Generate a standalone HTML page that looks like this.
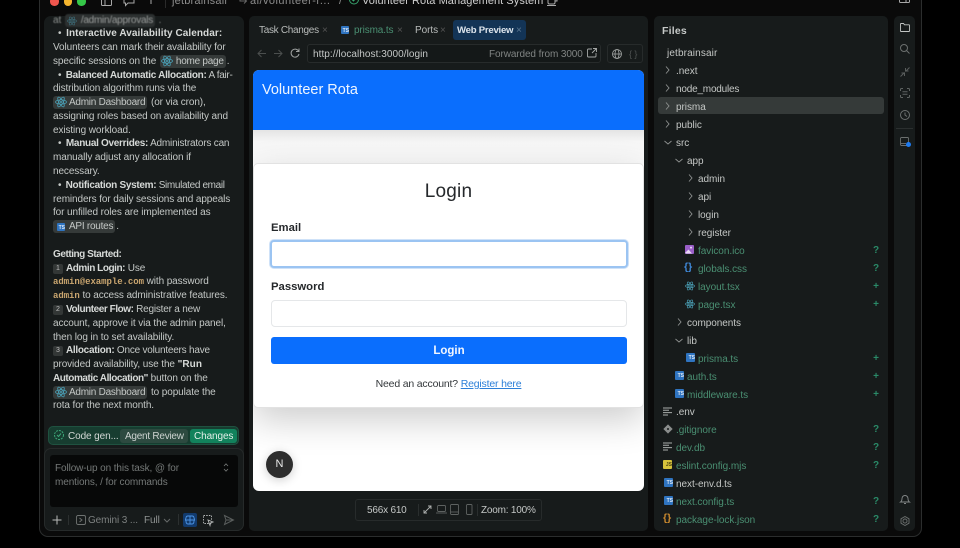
<!DOCTYPE html>
<html><head><meta charset="utf-8">
<style>
html,body{margin:0;padding:0;background:#000;width:960px;height:548px;overflow:hidden}
body{font-family:"Liberation Sans",sans-serif;position:relative}
#root{position:absolute;left:0;top:0;width:960px;height:548px;overflow:hidden;filter:blur(.35px)}
.a{position:absolute}
.t{position:absolute;white-space:nowrap;line-height:14px;height:14px}
.c{font-size:10px;color:#c4c8c6;letter-spacing:-.1px;left:53px;margin-top:1px}
.c b{color:#d6d9d7;font-weight:bold;letter-spacing:.07px}
.c b.n1{letter-spacing:-.3px}
.c b.n2{letter-spacing:-.45px}
.bl{margin-left:5px;margin-right:2px}
.chip{background:#353a39;border-radius:3px;padding:1px 2px 1px 16px;position:relative;color:#c4c8c6;margin:0 1px;letter-spacing:-.25px}
.code{font-family:"Liberation Mono",monospace;font-size:9px;color:#c9a56f;font-weight:bold;letter-spacing:-.05px}
.num{display:inline-block;width:10px;height:10px;background:#333736;border-radius:2px;font-size:7px;line-height:10px;text-align:center;color:#bbb;margin-right:3px;vertical-align:1px;letter-spacing:0}
.f{font-size:10px;letter-spacing:-.05px;color:#c4c7c5;margin-top:1px}
.r{margin-top:2px}
.g{color:#4a8f72}
.s{font-size:10px;font-weight:bold;color:#2a8a68;left:873px;width:6px;text-align:center;margin-top:1px}
.ts{position:absolute;width:9px;height:9px;background:#2f74c0;color:#dfe9f5;font-size:5px;font-weight:bold;line-height:11px;text-align:right;border-radius:1px;overflow:hidden;letter-spacing:0}
svg{position:absolute;overflow:visible;fill:none}
</style></head><body><div id="root">
<svg width="0" height="0"><defs>
<symbol id="re" viewBox="0 0 12 12" overflow="visible"><g fill="none" stroke="#4a9fb5" stroke-width=".8"><ellipse cx="6" cy="6" rx="5.5" ry="2.1"/><ellipse cx="6" cy="6" rx="5.5" ry="2.1" transform="rotate(60 6 6)"/><ellipse cx="6" cy="6" rx="5.5" ry="2.1" transform="rotate(120 6 6)"/></g><circle cx="6" cy="6" r="1" fill="#4a9fb5"/></symbol>
</defs></svg>

<!-- window -->
<div class="a" style="left:39px;top:-20px;width:883px;height:557px;background:#0a0a0a;border:1px solid #2b2d2d;border-radius:9px;box-sizing:border-box"></div>

<!-- title bar -->
<div class="a" style="left:50px;top:-3px;width:8.5px;height:8.5px;border-radius:50%;background:#f0564e"></div>
<div class="a" style="left:63.500px;top:-3px;width:8.5px;height:8.5px;border-radius:50%;background:#f5b52e"></div>
<div class="a" style="left:77px;top:-3px;width:8.5px;height:8.5px;border-radius:50%;background:#35c748"></div>
<svg style="left:101px;top:-3px" width="11" height="9" stroke="#a8a8a8"><rect x=".5" y="-1" width="10" height="9.5" rx="1"/><path d="M4 -1V8.5"/></svg>
<svg style="left:123px;top:-3px" width="12" height="10" stroke="#a8a8a8"><path d="M1 -1H11V6H5L2.5 8.5V6H1Z"/></svg>
<svg style="left:146px;top:-3px" width="10" height="10" stroke="#a8a8a8"><path d="M5 -2V7M.5 2.5H9.5"/></svg>
<div class="a" style="left:165px;top:0;width:1px;height:8px;background:#2a2a2a"></div>
<div class="t f" style="left:172px;top:-7px;color:#8d8d8d;font-size:11px;letter-spacing:.2px">jetbrainsair</div>
<svg style="left:238px;top:-2px" width="10" height="9" stroke="#666"><path d="M2 -2V3H8M6 .5 8.5 3 6 5.5"/></svg>
<div class="t f" style="left:250px;top:-7px;color:#8d8d8d;font-size:11px;letter-spacing:.45px">ai/volunteer-r...</div>
<div class="t f" style="left:339px;top:-7px;color:#8d8d8d;font-size:11px">/</div>
<svg style="left:349px;top:-3px" width="10" height="10" stroke="#39a56f"><circle cx="5" cy="2.5" r="4.5"/><path d="M3 2.5 4.5 4 7 1"/></svg>
<div class="t f" style="left:362px;top:-7px;color:#cfcfcf;font-size:11px;letter-spacing:.05px">Volunteer Rota Management System</div>
<svg style="left:547px;top:-2px" width="11" height="9" stroke="#aaa"><path d="M1 -1H8V4.5Q8 6 6.5 6H2.5Q1 6 1 4.5ZM8 0H10V3H8M0 7.5H9"/></svg>
<svg style="left:899px;top:-3px" width="12" height="9" stroke="#a8a8a8"><rect x=".5" y="-1" width="10" height="6.5" rx="1"/><path d="M7 -1V5.5"/></svg>

<!-- chat panel -->
<div class="a" style="left:44px;top:16px;width:200px;height:515px;background:#171b1b;border-radius:7px"></div>
<div class="t c" style="top:13px;color:#8c908e;filter:blur(.4px)">at <span class="chip" style="color:#9a9d9c;background:#2c3030">/admin/approvals</span> .</div>
<svg style="left:67px;top:16px" width="10" height="10"><use href="#re" width="10" height="10" opacity=".5"/></svg>
<div class="t c" style="top:26px"><span class="bl">•</span> <b>Interactive Availability Calendar:</b></div>
<div class="t c" style="top:40px">Volunteers can mark their availability for</div>
<div class="t c" style="top:54px">specific sessions on the <span class="chip">home page</span>.</div>
<svg style="left:161px;top:55px" width="12" height="12"><use href="#re" width="12" height="12"/></svg>
<div class="t c" style="top:68px;letter-spacing:-.3px"><span class="bl">•</span> <b class="n1">Balanced Automatic Allocation:</b> A fair-</div>
<div class="t c" style="top:81px">distribution algorithm runs via the</div>
<div class="t c" style="top:95px;margin-left:-1px"><span class="chip">Admin Dashboard</span> (or via cron),</div>
<svg style="left:55px;top:96px" width="12" height="12"><use href="#re" width="12" height="12"/></svg>
<div class="t c" style="top:109px">assigning roles based on availability and</div>
<div class="t c" style="top:123px">existing workload.</div>
<div class="t c" style="top:136px;letter-spacing:-.2px"><span class="bl">•</span> <b class="n1">Manual Overrides:</b> Administrators can</div>
<div class="t c" style="top:150px">manually adjust any allocation if</div>
<div class="t c" style="top:164px">necessary.</div>
<div class="t c" style="top:178px;letter-spacing:-.35px"><span class="bl">•</span> <b class="n1">Notification System:</b> Simulated email</div>
<div class="t c" style="top:192px">reminders for daily sessions and appeals</div>
<div class="t c" style="top:205px">for unfilled roles are implemented as</div>
<div class="t c" style="top:219px;margin-left:-1px"><span class="chip">API routes</span>.</div>
<div class="ts" style="left:57px;top:223px;width:8px;height:8px">TS</div>
<div class="t c" style="top:247px"><b class="n2">Getting Started:</b></div>
<div class="t c" style="top:261px"><span class="num">1</span><b class="n2">Admin Login:</b> Use</div>
<div class="t c" style="top:274px"><span class="code">admin@example.com</span> with password</div>
<div class="t c" style="top:288px"><span class="code">admin</span> to access administrative features.</div>
<div class="t c" style="top:302px;letter-spacing:-.2px"><span class="num">2</span><b class="n2">Volunteer Flow:</b> Register a new</div>
<div class="t c" style="top:316px">account, approve it via the admin panel,</div>
<div class="t c" style="top:330px">then log in to set availability.</div>
<div class="t c" style="top:343px;letter-spacing:-.22px"><span class="num">3</span><b class="n1">Allocation:</b> Once volunteers have</div>
<div class="t c" style="top:357px">provided availability, use the <b>"Run</b></div>
<div class="t c" style="top:371px"><b class="n2">Automatic Allocation"</b> button on the</div>
<div class="t c" style="top:385px;margin-left:-1px"><span class="chip">Admin Dashboard</span> to populate the</div>
<svg style="left:55px;top:386px" width="12" height="12"><use href="#re" width="12" height="12"/></svg>
<div class="t c" style="top:398px">rota for the next month.</div>

<!-- status pill -->
<div class="a" style="left:48px;top:426px;width:191px;height:19px;background:#173d30;border:1px solid #1f5240;border-radius:5px;box-sizing:border-box"></div>
<svg style="left:54px;top:430px" width="11" height="11" stroke="#3da878"><circle cx="5" cy="5" r="4.5" stroke-dasharray="2 1"/><path d="M3 5 4.5 6.5 7 3.5"/></svg>
<div class="t c" style="left:68px;top:429px;color:#d3d8d5">Code gen...</div>
<div class="a" style="left:120px;top:429px;width:68px;height:14px;background:#2d4a40;border-radius:3px"></div>
<div class="t c" style="left:125px;top:429px;color:#cdd3d0;letter-spacing:-.25px">Agent Review</div>
<div class="a" style="left:190px;top:429px;width:47px;height:14px;background:#12825c;border-radius:3px"></div>
<div class="t c" style="left:194px;top:429px;color:#e3efe9">Changes</div>

<!-- input -->
<div class="a" style="left:44px;top:448px;width:200px;height:83px;background:#171b1b;border:1px solid #262a2a;border-radius:7px;box-sizing:border-box"></div>
<div class="a" style="left:50px;top:455px;width:188px;height:52px;background:#070808;border-radius:3px"></div>
<div class="t c" style="left:55px;top:461px;color:#747877">Follow-up on this task, @ for</div>
<div class="t c" style="left:55px;top:475px;color:#747877">mentions, / for commands</div>
<svg style="left:223px;top:463px" width="6" height="9" stroke="#767a79" stroke-width=".8"><path d="M1 3 3 .8 5 3M1 6 3 8.2 5 6"/></svg>
<svg style="left:52px;top:515px" width="10" height="10" stroke="#b8bbba"><path d="M5 .5V9.5M.5 5H9.5"/></svg>
<div class="a" style="left:68px;top:515px;width:1px;height:10px;background:#2c3030"></div>
<svg style="left:76px;top:515px" width="10" height="10" stroke="#6f7372" stroke-width=".9"><rect x=".5" y=".5" width="9" height="9" rx="1.5"/><path d="M3.5 3 6 5 3.5 7"/></svg>
<div class="t c" style="left:88px;top:513px;color:#7d8180">Gemini 3 ...</div>
<div class="t c" style="left:144px;top:513px;color:#8f9392">Full</div>
<svg style="left:163px;top:518px" width="8" height="5" stroke="#666a69"><path d="M1 1 4 4 7 1"/></svg>
<div class="a" style="left:178px;top:514px;width:1px;height:11px;background:#2c3030"></div>
<div class="a" style="left:183px;top:513px;width:14px;height:14px;background:#123a6c;border-radius:2px"></div>
<svg style="left:185px;top:515px" width="10" height="10" stroke="#4c94e4" stroke-width=".9"><path d="M5 1V9M3 1Q1 1 1 3Q0 5 1 6Q1 9 3 9H7Q9 9 9 6Q10 5 9 3Q9 1 7 1ZM1 5H9"/></svg>
<svg style="left:203px;top:515px" width="11" height="11" stroke="#b6b9b8" stroke-width=".9"><rect x=".5" y=".5" width="8" height="8" stroke-dasharray="1.5 1.2"/><path d="M5 5 10 7 7.5 8 7 10.5Z" fill="#171b1b"/></svg>
<svg style="left:224px;top:515px" width="10" height="10" stroke="#5a5e5d"><path d="M.5 .5 9.5 5 .5 9.5 2 5ZM2 5H9.5"/></svg>

<!-- middle panel -->
<div class="a" style="left:249px;top:16px;width:399px;height:515px;background:#171b1b;border-radius:5px"></div>
<div class="t f" style="left:259px;top:23px;color:#b8bbba;letter-spacing:-.3px">Task Changes</div>
<div class="t f" style="left:322px;top:23px;color:#555">×</div>
<div class="ts" style="left:341px;top:26px;width:8px;height:8px">TS</div>
<div class="t f" style="left:354px;top:23px;color:#4a8f72;letter-spacing:-.13px">prisma.ts</div>
<div class="t f" style="left:397px;top:23px;color:#555">×</div>
<div class="t f" style="left:415px;top:23px;color:#b8bbba">Ports</div>
<div class="t f" style="left:440px;top:23px;color:#555">×</div>
<div class="a" style="left:453px;top:20px;width:73px;height:20px;background:#133456;border-radius:3px"></div>
<div class="t f" style="left:457px;top:23px;color:#dce4ec;font-weight:bold;font-size:9.6px;letter-spacing:-.25px">Web Preview</div>
<div class="t f" style="left:516px;top:23px;color:#5a7690">×</div>

<svg style="left:257px;top:49px" width="10" height="9" stroke="#4b4f4e"><path d="M9 4.5H1M4.5 1 1 4.5 4.5 8"/></svg>
<svg style="left:273px;top:49px" width="10" height="9" stroke="#4b4f4e"><path d="M1 4.5H9M5.5 1 9 4.5 5.5 8"/></svg>
<svg style="left:290px;top:48px" width="10" height="10" stroke="#9ea1a0"><path d="M8.5 3A4 4 0 1 0 9 6M9 .5V3.5H6"/></svg>
<div class="a" style="left:307px;top:44px;width:294px;height:19px;border:1px solid #272b2b;border-radius:3px;box-sizing:border-box;background:#141818"></div>
<div class="t f" style="left:313px;top:47px;color:#c4c7c6;letter-spacing:.06px">http://localhost:3000/login</div>
<div class="t f" style="left:489px;top:47px;color:#808483;letter-spacing:-.1px">Forwarded from 3000</div>
<svg style="left:587px;top:48px" width="10" height="10" stroke="#a5a8a7" stroke-width=".9"><path d="M5 1H1.5Q.5 1 .5 2V8Q.5 9 1.5 9H8Q9 9 9 8V5M6 .5H9.5V4M9.5 .5 5 5"/></svg>
<div class="a" style="left:607px;top:44px;width:36px;height:19px;border:1px solid #272b2b;border-radius:3px;box-sizing:border-box"></div>
<svg style="left:612px;top:49px" width="10" height="10" stroke="#a5a8a7" stroke-width=".8"><circle cx="5" cy="5" r="4.5"/><ellipse cx="5" cy="5" rx="2" ry="4.5"/><path d="M.5 5H9.5"/></svg>
<div class="t f" style="left:629px;top:46px;color:#4f5352;font-size:9px">{ }</div>

<!-- preview -->
<div class="a" style="left:253px;top:70px;width:391px;height:421px;background:#fff;border-radius:6px;overflow:hidden">
  <div class="a" style="left:0;top:0;width:391px;height:60px;background:#0a6efd"></div>
  <div class="a" style="left:0;top:60px;width:391px;height:34px;background:linear-gradient(#e4e4e4,#f6f6f6 35%,#fafafa)"></div>
  <div class="a" style="left:0;top:93px;width:391px;height:245px;background:#fff;border:1px solid #e2e2e2;border-radius:5px;box-sizing:border-box;box-shadow:0 12px 36px rgba(0,0,0,.2)"></div>
  <div class="t" style="left:9px;top:11px;height:18px;line-height:18px;font-size:14.5px;color:#eef5ff">Volunteer Rota</div>
  <div class="t" style="left:0;width:391px;text-align:center;top:110px;height:24px;line-height:24px;font-size:19px;color:#25282b;letter-spacing:.2px">Login</div>
  <div class="t" style="left:18px;top:151px;font-size:11.3px;font-weight:bold;color:#25282b">Email</div>
  <div class="a" style="left:17px;top:170px;width:358px;height:28px;background:#fff;border:2px solid #9bc4f2;border-radius:4px;box-sizing:border-box;box-shadow:0 0 0 1px #cfe2f8"></div>
  <div class="t" style="left:18px;top:210px;font-size:11.3px;font-weight:bold;color:#25282b">Password</div>
  <div class="a" style="left:18px;top:230px;width:356px;height:27px;background:#fff;border:1px solid #e5e7e9;border-radius:4px;box-sizing:border-box"></div>
  <div class="a" style="left:18px;top:267px;width:356px;height:27px;background:#0a6efd;border-radius:3px;color:#f1f6ff;font-size:11.5px;font-weight:bold;line-height:28px;text-align:center">Login</div>
  <div class="t" style="left:0;width:391px;text-align:center;top:307px;font-size:10.5px;color:#33373a;letter-spacing:-.18px">Need an account? <span style="color:#2c7fd8;text-decoration:underline">Register here</span></div>
  <div class="a" style="left:13px;top:381px;width:27px;height:27px;border-radius:50%;background:#2d2d2d;box-shadow:0 2px 10px rgba(0,0,0,.2);color:#e8e8e8;font-size:11px;line-height:27px;text-align:center">N</div>
</div>

<!-- bottom toolbar -->
<div class="a" style="left:355px;top:499px;width:187px;height:22px;border:1px solid #272b2b;border-radius:3px;box-sizing:border-box"></div>
<div class="t f" style="left:367px;top:503px;color:#c4c7c6;letter-spacing:-.2px">566x 610</div>
<div class="a" style="left:418px;top:504px;width:1px;height:12px;background:#2a2e2e"></div>
<svg style="left:423px;top:505px" width="9" height="9" stroke="#b0b3b2" stroke-width=".9"><path d="M1 8 8 1M5 1H8V4M1 5V8H4"/></svg>
<svg style="left:436px;top:505px" width="11" height="9" stroke="#5e6261" stroke-width=".9"><rect x="1.5" y=".5" width="8" height="6" rx="1"/><path d="M0 8H11"/></svg>
<svg style="left:450px;top:504px" width="10" height="11" stroke="#5e6261" stroke-width=".9"><rect x=".5" y=".5" width="8" height="10" rx="1"/><path d="M.5 8H8.5"/></svg>
<svg style="left:466px;top:504px" width="7" height="11" stroke="#5e6261" stroke-width=".9"><rect x=".5" y=".5" width="5.5" height="10" rx="1"/></svg>
<div class="a" style="left:477px;top:504px;width:1px;height:12px;background:#2a2e2e"></div>
<div class="t f" style="left:481px;top:503px;color:#c4c7c6;letter-spacing:-.2px">Zoom: 100%</div>

<!-- files panel -->
<div class="a" style="left:654px;top:16px;width:234px;height:515px;background:#171b1b;border-radius:5px"></div>
<div class="t" style="left:662px;top:24px;font-size:10.5px;font-weight:bold;color:#c6c9c8;letter-spacing:.2px">Files</div>
<div class="a" style="left:658px;top:97px;width:226px;height:17px;background:#353a39;border-radius:3px"></div>
<div class="t f r" style="left:667px;top:45px;letter-spacing:.13px">jetbrainsair</div>
<div class="t f r" style="left:676px;top:63px">.next</div>
<div class="t f r" style="left:676px;top:81px;letter-spacing:-.2px">node_modules</div>
<div class="t f r" style="left:676px;top:99px">prisma</div>
<div class="t f r" style="left:676px;top:117px">public</div>
<div class="t f r" style="left:676px;top:135px">src</div>
<div class="t f r" style="left:687px;top:153px">app</div>
<div class="t f r" style="left:698px;top:171px">admin</div>
<div class="t f r" style="left:698px;top:189px">api</div>
<div class="t f r" style="left:698px;top:207px">login</div>
<div class="t f r" style="left:698px;top:225px">register</div>
<div class="t f g r" style="left:698px;top:243px">favicon.ico</div>
<div class="t f g r" style="left:698px;top:261px">globals.css</div>
<div class="t f g r" style="left:698px;top:279px">layout.tsx</div>
<div class="t f g r" style="left:698px;top:297px">page.tsx</div>
<div class="t f r" style="left:687px;top:315px">components</div>
<div class="t f r" style="left:687px;top:333px">lib</div>
<div class="t f g r" style="left:698px;top:351px">prisma.ts</div>
<div class="t f g r" style="left:687px;top:369px">auth.ts</div>
<div class="t f g r" style="left:687px;top:387px">middleware.ts</div>
<div class="t f r" style="left:676px;top:404px">.env</div>
<div class="t f g r" style="left:676px;top:422px">.gitignore</div>
<div class="t f g r" style="left:676px;top:440px">dev.db</div>
<div class="t f g r" style="left:676px;top:458px">eslint.config.mjs</div>
<div class="t f r" style="left:676px;top:476px">next-env.d.ts</div>
<div class="t f g r" style="left:676px;top:494px">next.config.ts</div>
<div class="t f g r" style="left:676px;top:512px">package-lock.json</div>

<!-- chevrons -->
<svg style="left:665px;top:66px" width="5" height="8" stroke="#8e9190" stroke-width=".9"><path d="M1 .5 4 4 1 7.5"/></svg>
<svg style="left:665px;top:84px" width="5" height="8" stroke="#8e9190" stroke-width=".9"><path d="M1 .5 4 4 1 7.5"/></svg>
<svg style="left:665px;top:102px" width="5" height="8" stroke="#8e9190" stroke-width=".9"><path d="M1 .5 4 4 1 7.5"/></svg>
<svg style="left:665px;top:120px" width="5" height="8" stroke="#8e9190" stroke-width=".9"><path d="M1 .5 4 4 1 7.5"/></svg>
<svg style="left:664px;top:140px" width="8" height="5" stroke="#8e9190" stroke-width=".9"><path d="M.5 1 4 4 7.5 1"/></svg>
<svg style="left:675px;top:158px" width="8" height="5" stroke="#8e9190" stroke-width=".9"><path d="M.5 1 4 4 7.5 1"/></svg>
<svg style="left:688px;top:174px" width="5" height="8" stroke="#8e9190" stroke-width=".9"><path d="M1 .5 4 4 1 7.5"/></svg>
<svg style="left:688px;top:192px" width="5" height="8" stroke="#8e9190" stroke-width=".9"><path d="M1 .5 4 4 1 7.5"/></svg>
<svg style="left:688px;top:210px" width="5" height="8" stroke="#8e9190" stroke-width=".9"><path d="M1 .5 4 4 1 7.5"/></svg>
<svg style="left:688px;top:228px" width="5" height="8" stroke="#8e9190" stroke-width=".9"><path d="M1 .5 4 4 1 7.5"/></svg>
<svg style="left:677px;top:318px" width="5" height="8" stroke="#8e9190" stroke-width=".9"><path d="M1 .5 4 4 1 7.5"/></svg>
<svg style="left:675px;top:338px" width="8" height="5" stroke="#8e9190" stroke-width=".9"><path d="M.5 1 4 4 7.5 1"/></svg>

<!-- file icons -->
<svg style="left:685px;top:245px" width="9" height="9"><rect width="9" height="9" rx="1" fill="#9a5fc8"/><circle cx="6" cy="2.6" r="1" fill="#e8d8f4"/><path d="M0 8 3.5 4.5 7 8.5H1Z" fill="#e8d8f4"/></svg>
<div class="t" style="left:684px;top:260px;font-size:10.5px;font-weight:bold;color:#3f88d8">{}</div>
<svg style="left:685px;top:281px" width="10" height="10"><use href="#re" width="10" height="10"/></svg>
<svg style="left:685px;top:299px" width="10" height="10"><use href="#re" width="10" height="10"/></svg>
<div class="ts" style="left:686px;top:353px">TS</div>
<div class="ts" style="left:675px;top:371px">TS</div>
<div class="ts" style="left:675px;top:389px">TS</div>
<svg style="left:663px;top:407px" width="10" height="9" stroke="#a9acab"><path d="M0 1H9M0 3.3H6M0 5.6H9M0 8H5"/></svg>
<svg style="left:663px;top:424px" width="10" height="10"><rect x="1.7" y="1.7" width="6.6" height="6.6" transform="rotate(45 5 5)" fill="#8a8d8c"/><circle cx="5" cy="5" r="1" fill="#171b1b"/></svg>
<svg style="left:663px;top:442px" width="10" height="9" stroke="#a9acab"><path d="M0 1H9M0 3.3H6M0 5.6H9M0 8H5"/></svg>
<div class="a" style="left:663px;top:460px;width:9px;height:9px;background:#d6c23c;border-radius:1px;color:#4a4210;font-size:5px;font-weight:bold;line-height:11px;text-align:right;overflow:hidden">JS</div>
<div class="ts" style="left:664px;top:478px">TS</div>
<div class="ts" style="left:664px;top:496px">TS</div>
<div class="t" style="left:663px;top:511px;font-size:10.5px;font-weight:bold;color:#c9892e">{}</div>

<!-- git status -->
<div class="t s" style="top:243px">?</div>
<div class="t s" style="top:261px">?</div>
<div class="t s" style="top:279px">+</div>
<div class="t s" style="top:297px">+</div>
<div class="t s" style="top:351px">+</div>
<div class="t s" style="top:369px">+</div>
<div class="t s" style="top:387px">+</div>
<div class="t s" style="top:422px">?</div>
<div class="t s" style="top:440px">?</div>
<div class="t s" style="top:458px">?</div>
<div class="t s" style="top:494px">?</div>
<div class="t s" style="top:512px">?</div>

<!-- icon strip -->
<div class="a" style="left:894px;top:16px;width:21px;height:515px;background:#171b1b;border-radius:5px"></div>
<svg style="left:900px;top:23px" width="10" height="9" stroke="#c2c5c4" stroke-width=".9"><path d="M.5 1Q.5.5 1 .5H3.5L4.5 1.8H9Q9.500 1.800 9.500 2.300V8Q9.500 8.500 9 8.500H1Q.5 8.500 .5 8Z"/></svg>
<svg style="left:900px;top:44px" width="10" height="10" stroke="#6c706f"><circle cx="4" cy="4" r="3.500"/><path d="M6.500 6.500 9.500 9.500"/></svg>
<svg style="left:900px;top:67px" width="10" height="10" stroke="#5a5e5d"><path d="M.5 9.500 4.500 5.500M5.500 4.500 9.500 .5M1.500 6H4.500V9M5.500 1V4H8.500"/></svg>
<svg style="left:900px;top:88px" width="10" height="10" stroke="#5f6362"><path d="M.5 3V1.500Q.5.5 1.500 .5H3M7 .5H8.500Q9.500 .5 9.500 1.500V3M.5 7V8.500Q.5 9.500 1.500 9.500H3M7 9.500H8.500Q9.500 9.500 9.500 8.500V7M2.500 3.800H7.500M2.500 6.200H7.500"/></svg>
<svg style="left:900px;top:110px" width="10" height="10" stroke="#6c706f"><circle cx="5" cy="5" r="4.500"/><path d="M5 2.500V5L7 6.500"/></svg>
<div class="a" style="left:896px;top:128px;width:17px;height:1px;background:#2b2f2f"></div>
<svg style="left:900px;top:137px" width="9" height="9" stroke="#6c706f" stroke-width=".9"><rect x=".5" y=".5" width="8" height="8" rx="1"/><path d="M.5 6.500H6"/></svg>
<div class="a" style="left:906px;top:142px;width:5px;height:5px;border-radius:50%;background:#1e7bf0"></div>
<svg style="left:900px;top:494px" width="10" height="11" stroke="#85898a" stroke-width=".9"><path d="M.5 8H9.500Q8 7 8 4.500A3 3 0 0 0 2 4.500Q2 7 .5 8ZM4 9.500H6"/></svg>
<svg style="left:900px;top:516px" width="10" height="10" stroke="#6c706f" stroke-width=".9"><path d="M5 .5 9 2.800V7.200L5 9.500 1 7.200V2.800Z"/><circle cx="5" cy="5" r="2"/></svg>

</div></body></html>
